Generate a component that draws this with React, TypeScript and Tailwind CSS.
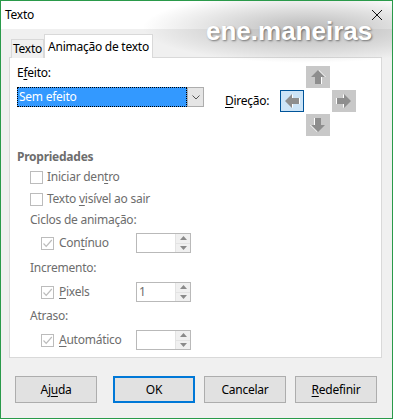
import React from "react";

function Arrow({ dir }: { dir: "up" | "down" | "left" | "right" }) {
  // arrow pointing up, rotated for others
  const rot = { up: 0, right: 90, down: 180, left: 270 }[dir];
  const pts = "12,4 19,11 15,11 15,18 9,18 9,11 5,11";
  return (
    <svg width="24" height="22" viewBox="0 0 24 22">
      <g transform={`rotate(${rot} 12 11)`}>
        <polygon points={pts} fill="#ffffff" transform={dir === "up" || dir === "down" ? "translate(1,0)" : "translate(0,1)"} />
        <polygon points={pts} fill="#8e8e8e" />
      </g>
    </svg>
  );
}

function Check({ checked }: { checked?: boolean }) {
  return (
    <span className="w-[13px] h-[13px] border border-[#bcbcbc] bg-white flex items-center justify-center shrink-0">
      {checked && (
        <svg width="11" height="11" viewBox="0 0 11 11">
          <path d="M1.5 5.5 L4.2 8.3 L9.8 2" stroke="#bcbcbc" strokeWidth="1.2" fill="none" />
        </svg>
      )}
    </span>
  );
}

function Spin({ value }: { value?: string }) {
  return (
    <div className="w-[55px] h-[20px] border border-[#b9b9b9] bg-white flex">
      <div className="flex-1 pl-[2px] leading-[18px] text-[#6d6d6d]">{value}</div>
      <div className="w-[15px] flex flex-col border-l border-[#e3e3e3] bg-[#f0f0f0]">
        <div className="flex-1 flex items-center justify-center border-b border-[#e3e3e3]">
          <svg width="7" height="4" viewBox="0 0 7 4"><polygon points="3.5,0 7,4 0,4" fill="#8a8a8a" /></svg>
        </div>
        <div className="flex-1 flex items-center justify-center">
          <svg width="7" height="4" viewBox="0 0 7 4"><polygon points="0,0 7,0 3.5,4" fill="#8a8a8a" /></svg>
        </div>
      </div>
    </div>
  );
}

export default function App() {
  return (
    <div className="w-[393px] h-[419px] border border-[#2a9a4a] bg-[#f0f0f0] relative overflow-hidden font-['Noto_Sans',sans-serif] text-[12px] tracking-[-0.25px] text-black flex flex-col">
      {/* title bar */}
      <div className="h-[28px] bg-white flex items-center justify-between pl-[4px] pr-[9px] shrink-0">
        <span>Texto</span>
        <svg width="12" height="12" viewBox="0 0 12 12" className="relative z-10">
          <path d="M1 1 L11 11 M11 1 L1 11" stroke="#111" strokeWidth="1" />
        </svg>
      </div>

      {/* tabs */}
      <div className="flex items-end pl-[10px] pt-[5px] shrink-0 relative z-[1] -mb-px">
        <div className="w-[33px] h-[19px] border border-b-0 border-[#d9d9d9] bg-[#f0f0f0] flex items-center justify-center">Texto</div>
        <div className="w-[109px] h-[24px] border border-b-0 border-[#d9d9d9] bg-white flex items-center justify-center">Animação de texto</div>
      </div>

      {/* panel */}
      <div className="ml-[8px] w-[373px] h-[301px] border border-[#d9d9d9] bg-white px-[7px] flex flex-col shrink-0">
        <div className="flex h-[78px]">
          <div className="flex flex-col pt-[7px]">
            <div className="h-[16px] leading-[16px]">E<u className="underline-offset-2">f</u>eito:</div>
            <div className="mt-[6px] w-[187px] h-[20px] flex">
              <div className="flex-1 bg-[#3399ff] border border-dotted border-black text-white pl-[1px] leading-[17px]">Sem efeito</div>
              <div className="w-[17px] bg-[#e5e5e5] border border-[#adadad] flex items-center justify-center">
                <svg width="8" height="5" viewBox="0 0 8 5"><path d="M0.5 0.5 L4 4 L7.5 0.5" stroke="#555" fill="none" /></svg>
              </div>
            </div>
          </div>
          <div className="flex items-center mt-[8px] h-[70px] ml-[21px]">
            <div className="w-[55px]"><u className="underline-offset-2">D</u>ireção:</div>
            <div className="grid grid-cols-[24px_24px_24px] grid-rows-[22px_22px_22px] gap-[2px]">
              <div />
              <div className="bg-[#c8c8c8]"><Arrow dir="up" /></div>
              <div />
              <div className="bg-[#cce4f7] border border-[#005499] flex items-center justify-center"><div className="-m-px"><Arrow dir="left" /></div></div>
              <div />
              <div className="bg-[#c8c8c8]"><Arrow dir="right" /></div>
              <div />
              <div className="bg-[#c8c8c8]"><Arrow dir="down" /></div>
              <div />
            </div>
          </div>
        </div>

        <div className="text-[#6d6d6d] flex flex-col">
          <div className="h-[16px] leading-[16px] mt-[13px] font-bold">Propriedades</div>
          <div className="ml-[13px] flex flex-col">
            <div className="h-[22px] mt-[1px] flex items-center gap-[4px]"><Check /><span>Iniciar den<u className="underline-offset-2">t</u>ro</span></div>
            <div className="h-[22px] flex items-center gap-[4px]"><Check /><span>Texto <u className="underline-offset-2">v</u>isível ao sair</span></div>
            <div className="h-[20px] flex items-center">Ciclos de animação:</div>
            <div className="h-[22px] mt-[2px] ml-[11px] flex items-center">
              <div className="w-[95px] flex items-center gap-[5px]"><Check checked /><span>Con<u className="underline-offset-2">t</u>ínuo</span></div>
              <Spin />
            </div>
            <div className="h-[20px] mt-[4px] flex items-center">Incremento:</div>
            <div className="h-[22px] mt-[3px] ml-[11px] flex items-center">
              <div className="w-[95px] flex items-center gap-[5px]"><Check checked /><span><u className="underline-offset-2">P</u>ixels</span></div>
              <Spin value="1" />
            </div>
            <div className="h-[20px] mt-[3px] flex items-center">Atraso:</div>
            <div className="h-[22px] mt-[3px] ml-[11px] flex items-center">
              <div className="w-[95px] flex items-center gap-[5px]"><Check checked /><span><u className="underline-offset-2">A</u>utomático</span></div>
              <Spin />
            </div>
          </div>
        </div>
      </div>

      {/* buttons */}
      <div className="flex mt-[18px] ml-[14px]">
        <button className="w-[82px] h-[27px] bg-[#e1e1e1] border border-[#adadad]">Aj<u className="underline-offset-2">u</u>da</button>
        <button className="w-[82px] h-[27px] ml-[16px] bg-[#e1e1e1] border-2 border-[#0078d7]">OK</button>
        <button className="w-[82px] h-[27px] ml-[9px] bg-[#e1e1e1] border border-[#adadad]">Cancelar</button>
        <button className="w-[82px] h-[27px] ml-[9px] bg-[#e1e1e1] border border-[#adadad]"><u className="underline-offset-2">R</u>edefinir</button>
      </div>

      {/* watermark */}
      <div className="absolute left-[120px] top-0 w-[273px] h-[64px] pointer-events-none bg-[radial-gradient(ellipse_60%_55%_at_68%_42%,rgba(140,140,140,0.6),rgba(140,140,140,0)_100%)]" />
      <div className="absolute left-[205px] top-[17px] font-['Liberation_Sans',sans-serif] font-bold text-[26px] tracking-normal leading-none text-white [text-shadow:1px_1px_2px_rgba(0,0,0,0.45)] pointer-events-none">
        ene.maneiras
      </div>
    </div>
  );
}
